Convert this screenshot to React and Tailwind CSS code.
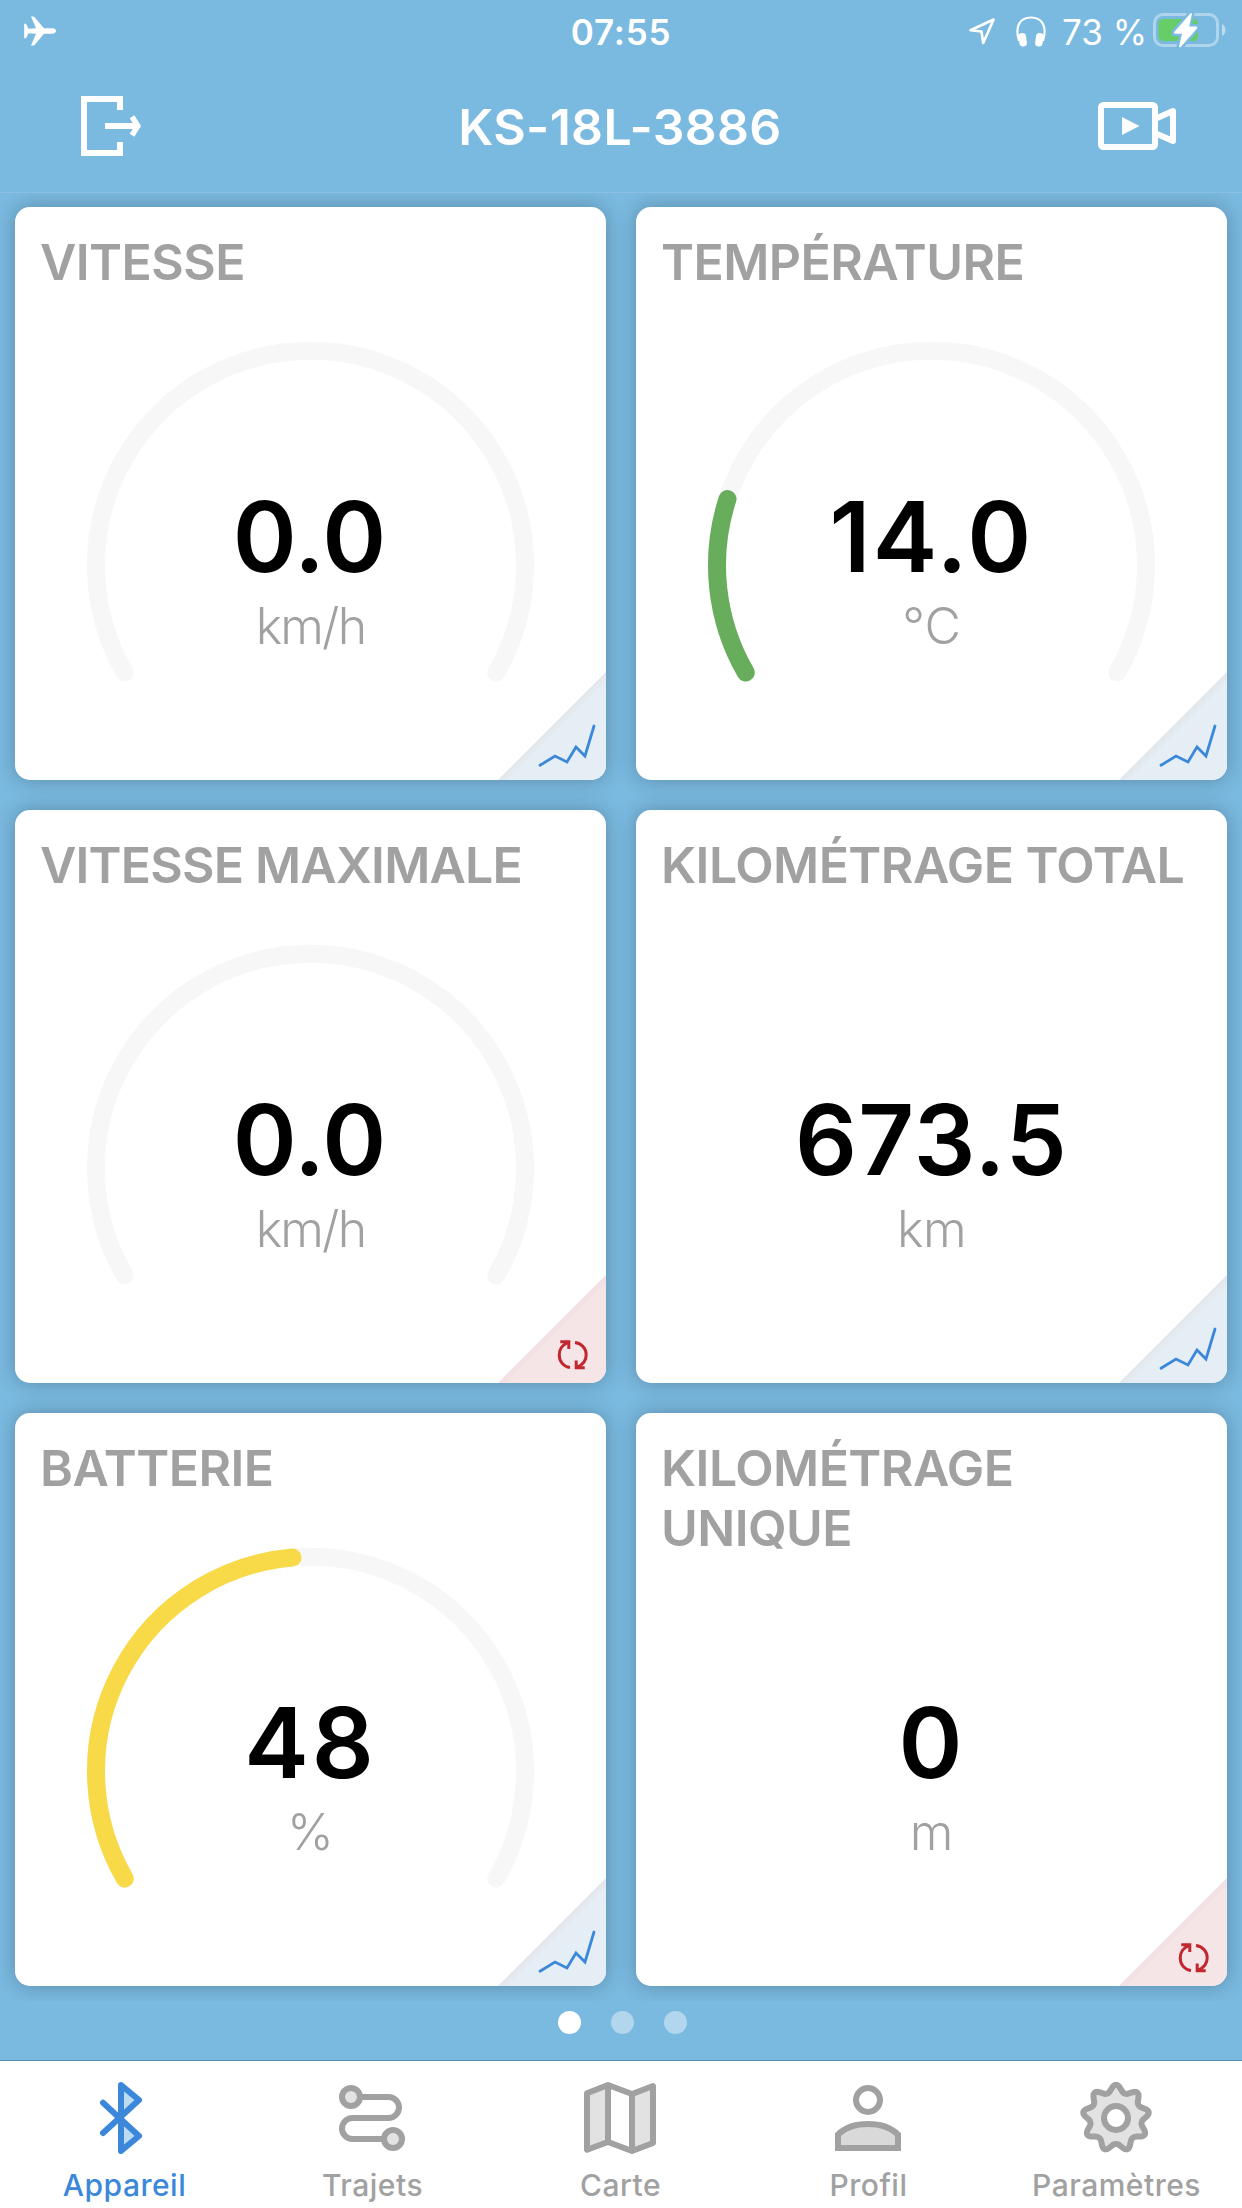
import React from 'react';

const CARDS = [
  { title: 'VITESSE', value: '0.0', unit: 'km/h', unitSpacing: 'tracking-[-1.8px]', valueSpacing: 'pr-[2px]', gauge: true, percent: 0, action: 'chart' },
  { title: 'TEMPÉRATURE', value: '14.0', unit: '°C', valueSpacing: 'tracking-[2.4px]', gauge: true, percent: 20, color: '#68ad5b', action: 'chart' },
  { title: 'VITESSE MAXIMALE', value: '0.0', unit: 'km/h', titleSpacing: 'tracking-[-0.8px]', unitSpacing: 'tracking-[-1.8px]', valueSpacing: 'pr-[2px]', gauge: true, percent: 0, action: 'reset' },
  { title: 'KILOMÉTRAGE TOTAL', value: '673.5', unit: 'km', unitSpacing: 'tracking-[-0.5px]', valueSpacing: 'tracking-[1.2px]', action: 'chart' },
  { title: 'BATTERIE', value: '48', unit: '%', valueSpacing: 'tracking-[3px]', gauge: true, percent: 48, color: '#f8da49', action: 'chart' },
  { title: 'KILOMÉTRAGE UNIQUE', value: '0', unit: 'm', valueSpacing: 'pr-[2px]', action: 'reset' },
];

const GAUGE_SWEEP = 240;

// Arc of the gauge, starting at the lower left end and running clockwise
const arcPath = (percent) => {
  const cx = 295.5;
  const cy = 358.3;
  const r = 214.5;
  const point = (deg) => {
    const rad = (deg * Math.PI) / 180;
    return `${cx + r * Math.cos(rad)} ${cy + r * Math.sin(rad)}`;
  };
  const sweep = (GAUGE_SWEEP * percent) / 100;
  return `M${point(150)} A${r} ${r} 0 ${sweep > 180 ? 1 : 0} 1 ${point(150 + sweep)}`;
};

const Gauge = ({ percent, color }) => (
  <svg viewBox="0 0 591 573" className="absolute inset-0 w-full h-full" fill="none" strokeWidth="18" strokeLinecap="round">
    <path d={arcPath(100)} stroke="#f7f7f7" />
    {percent > 0 && <path d={arcPath(percent)} stroke={color} />}
  </svg>
);

const CardCorner = ({ action, id }) => {
  const isChart = action === 'chart';
  return (
    <svg viewBox="0 0 108 108" className="absolute right-0 bottom-0 w-[108px] h-[108px]" fill="none">
      <defs>
        <linearGradient id={`fold-${id}`} gradientUnits="userSpaceOnUse" x1="54" y1="54" x2="60" y2="60">
          <stop offset="0" stopColor={isChart ? '#e1e6ea' : '#f0dfe1'} />
          <stop offset="1" stopColor={isChart ? '#e6eef5' : '#f5e5e7'} />
        </linearGradient>
      </defs>
      <path d="M108 0V108H0Z" fill={`url(#fold-${id})`} />
      {isChart ? (
        <path d="M42 93.3 57 84 69 90 78 75 87 84 96 54" stroke="#3b88da" strokeWidth="2.8" strokeLinecap="round" />
      ) : (
        <g stroke="#c1272d" strokeWidth="3">
          <path d="M72 92.6C65 91.5 61.2 86 61.2 79.7C61.2 74.5 64.5 69.5 70 67.5" />
          <path d="M62.3 66.7H70.8V74" />
          <path d="M77 67.5C84 68.5 88.2 74 88.2 79.7C88.2 85 85 89.5 79.5 91.8" />
          <path d="M86.7 92.7H78.2V85.5" />
        </g>
      )}
    </svg>
  );
};

const Card = ({ card, id }) => (
  <div className="relative h-[573px] bg-white rounded-[15px] overflow-hidden">
    {card.gauge && <Gauge percent={card.percent} color={card.color} />}
    <div className="relative h-[280px] pt-[25px] pl-[25px] pr-4">
      <h2 className={`text-[50px] leading-[60px] font-semibold text-[#a1a1a1] ${card.titleSpacing || 'tracking-[-0.55px]'}`}>
        {card.title}
      </h2>
    </div>
    <div className="relative text-center">
      <div className={`text-[97px] leading-[100px] font-semibold text-black ${card.valueSpacing}`}>{card.value}</div>
      <div className={`mt-2 text-[50px] leading-[62px] font-light text-[#a1a1a1] ${card.unitSpacing || ''}`}>{card.unit}</div>
    </div>
    <CardCorner action={card.action} id={id} />
  </div>
);

const StatusBar = () => (
  <div className="grid grid-cols-3 h-16 text-[35px] leading-[64px] text-white">
    <div className="pl-6 pt-4">
      <svg viewBox="0 0 32 30" className="w-8 h-[30px]" fill="#fff">
        <path d="M7 0.5H9.2Q10 0.5 10.6 1.3L20 12.2L28 12.3Q32 12.6 32 15Q32 17.4 28 17.7L20 17.8L10.6 28.9Q10 29.6 9.2 29.6H7L12 17.8L4.5 17.2L2 22.2H0.2V7.8H2L4.5 12.8L12 12.2Z" />
      </svg>
    </div>
    <div className="text-center font-semibold tracking-[0.8px]">07:55</div>
    <div className="flex justify-end pr-4">
      <svg viewBox="0 0 26 27" className="w-[26px] h-[27px] mt-[18px]" fill="none" stroke="#fff" strokeWidth="2.6" strokeLinejoin="round">
        <path d="M24.6 1.5L14.2 25L12.5 13.5L1.5 12.3Z" />
      </svg>
      <svg viewBox="0 0 30 31" className="w-[30px] h-[31px] mt-4 ml-[21px]" fill="none">
        <path d="M3 25C-1.5 10 4 1.5 15 1.5S31.5 10 27 25" stroke="#fff" strokeWidth="2.2" />
        <rect x="3" y="17" width="7.5" height="13.5" rx="3.7" transform="rotate(-8 6.7 24)" fill="#fff" />
        <rect x="19.5" y="17" width="7.5" height="13.5" rx="3.7" transform="rotate(8 23.3 24)" fill="#fff" />
      </svg>
      <span className="ml-4 whitespace-nowrap">73 %</span>
      <svg viewBox="0 0 74 36" className="w-[74px] h-9 mt-3 ml-[5px]" fill="none">
        <rect x="2.5" y="2.5" width="63" height="31" rx="8.5" stroke="#fff" strokeOpacity="0.4" strokeWidth="3" />
        <path d="M70 12Q73.5 14 73.5 18T70 24Z" fill="#fff" fillOpacity="0.5" />
        <rect x="6.5" y="7" width="39.5" height="22" rx="4.5" fill="#67ce67" />
        <path
          d="M38.5 1.2L22 20.2Q21.6 21.6 23 21.8H30L27 34.5Q28 35.8 29.2 34.6L45.2 16.2Q45.8 14.7 44.3 14.4H37.2L40 2Q39.6 0.6 38.5 1.2Z"
          fill="#fff"
          stroke="#7ab9e0"
          strokeWidth="5"
          paintOrder="stroke"
        />
      </svg>
    </div>
  </div>
);

const Header = () => (
  <div className="flex items-center justify-between h-[129px] pl-[81px] pr-[66px] pb-1 border-b border-[#8ac1e3] text-white">
    <svg viewBox="0 0 61 60" className="w-[61px] h-[60px]" fill="none" stroke="#fff" strokeWidth="6">
      <path d="M39 14V3H3V57H39V46" />
      <path d="M24 30H56" />
      <path d="M51 20.8L56.8 30L51 39.2" strokeWidth="5.5" />
    </svg>
    <h1 className="pt-[2px] text-[50px] font-semibold tracking-[0.3px]">KS-18L-3886</h1>
    <svg viewBox="0 0 78 48" className="w-[78px] h-12" fill="none" stroke="#fff" strokeWidth="6" strokeLinejoin="round">
      <rect x="3" y="3" width="54" height="42" rx="2.5" />
      <path d="M58 16.5L75 9V39L58 31.5" />
      <path d="M24 15L41.5 24L24 33Z" fill="#fff" stroke="none" />
    </svg>
  </div>
);

// Outline of the nine toothed wheel
const gearPath = () => {
  const points = [];
  for (let deg = 0; deg < 360; deg += 2) {
    const rad = (deg * Math.PI) / 180;
    const r = 26 + 7.2 * Math.pow((1 + Math.cos(9 * rad)) / 2, 1.3);
    points.push(`${(36 + r * Math.sin(rad)).toFixed(2)} ${(36 - r * Math.cos(rad)).toFixed(2)}`);
  }
  return `M${points.join('L')}Z`;
};

const TabIcon = ({ name }) => (
  <svg viewBox="0 0 72 72" className="w-[72px] h-[72px]" fill="none" stroke="currentColor" strokeWidth="6">
    {name === 'bluetooth' && (
      <g strokeLinecap="round" strokeLinejoin="round">
        <path d="M33 3L51 18L33 36L51 54L33 69Z" fill="#bddcf1" stroke="none" />
        <path d="M15 20.7L51 54L33 69V3L51 18L15 51" />
      </g>
    )}
    {name === 'route' && (
      <>
        <path d="M24 15H52.5A10.5 10.5 0 0 1 52.5 36H16.5A10.5 10.5 0 0 0 16.5 57H48" />
        <circle cx="15" cy="15" r="9" fill="#e2e2e2" />
        <circle cx="57" cy="57" r="9" fill="#e2e2e2" />
      </>
    )}
    {name === 'map' && (
      <g strokeLinejoin="round">
        <path d="M3 11.3L24 3V60L3 67.7ZM48 12L69 4V61L48 69Z" fill="#e2e2e2" stroke="none" />
        <path d="M3 11.3L24 3L48 12L69 4V61L48 69L24 60L3 67.7ZM24 3V60M48 12V69" />
      </g>
    )}
    {name === 'profile' && (
      <>
        <circle cx="36" cy="18" r="12" />
        <path d="M6 66V52.5C13 45.5 24 42 36 42S59 45.5 66 52.5V66Z" fill="#d9d9d9" />
      </>
    )}
    {name === 'gear' && (
      <>
        <path d={gearPath()} fill="#e2e2e2" strokeLinejoin="round" />
        <circle cx="36" cy="36" r="12" fill="#fff" />
      </>
    )}
  </svg>
);

const TABS = [
  { label: 'Appareil', icon: 'bluetooth', active: true },
  { label: 'Trajets', icon: 'route' },
  { label: 'Carte', icon: 'map' },
  { label: 'Profil', icon: 'profile' },
  { label: 'Paramètres', icon: 'gear' },
];

const TabBar = () => (
  <div className="h-[148px] border-t border-[#5588a9] bg-white">
    <div className="grid grid-cols-5 w-[1240px] pt-[21px]">
      {TABS.map((tab) => (
        <div
          key={tab.label}
          className={`flex flex-col items-center ${tab.active ? 'text-[#3b88da]' : 'text-[#a1a1a1]'}`}
        >
          <TabIcon name={tab.icon} />
          <span className="mt-3 pl-px text-[30px] leading-[38px] font-medium tracking-[0.5px]">{tab.label}</span>
        </div>
      ))}
    </div>
  </div>
);

const App = () => {
  return (
    <div className="flex flex-col w-[1242px] h-[2208px] bg-[#7ab9e0] font-['Inter',sans-serif] overflow-hidden">
      <StatusBar />
      <Header />
      <div className="h-[1808px] overflow-hidden px-[15px] pt-[14px]">
        <div className="grid grid-cols-2 gap-[30px]">
          {CARDS.map((card, index) => (
            <div key={card.title} className="rounded-[15px] shadow-[0_0_20px_rgba(0,0,0,0.25)]">
              <Card card={card} id={index} />
            </div>
          ))}
        </div>
      </div>
      <div className="flex justify-center gap-[30px] h-[59px] pt-[10px] pl-[2px]">
        <span className="w-[23px] h-[23px] rounded-full bg-white" />
        <span className="w-[23px] h-[23px] rounded-full bg-[#b2d6ed]" />
        <span className="w-[23px] h-[23px] rounded-full bg-[#b2d6ed]" />
      </div>
      <TabBar />
    </div>
  );
};

export default App;
